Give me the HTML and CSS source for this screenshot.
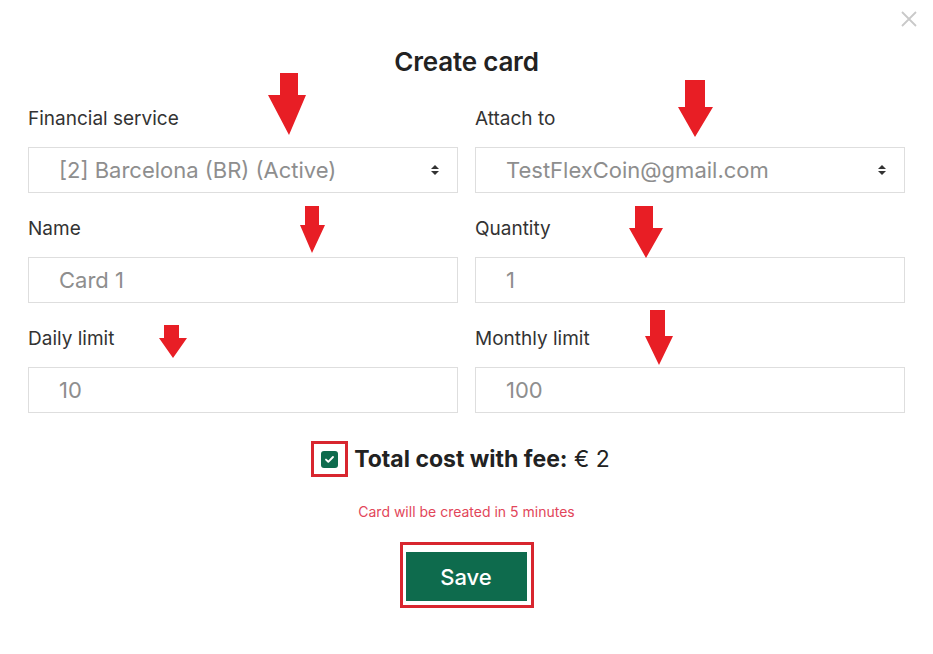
FILE: index.html
```html
<!DOCTYPE html>
<html lang="en">
<head>
<meta charset="utf-8">
<title>Create card</title>
<link rel="stylesheet" href="styles.css">
</head>
<body>
<div class="modal">
  <button class="close" aria-label="Close">
    <svg width="18" height="18" viewBox="0 0 18 18"><path d="M2 2L16 16M16 2L2 16" stroke="#c9c9c9" stroke-width="1.8" fill="none"/></svg>
  </button>
  <h1 class="title">Create card</h1>
  <div class="grid">
    <div class="field">
      <label class="label">Financial service</label>
      <div class="input select"><span>[2] Barcelona (BR) (Active)</span><span class="caret"><i class="up"></i><i class="down"></i></span></div>
    </div>
    <div class="field">
      <label class="label">Attach to</label>
      <div class="input select"><span>TestFlexCoin@gmail.com</span><span class="caret"><i class="up"></i><i class="down"></i></span></div>
    </div>
    <div class="field">
      <label class="label">Name</label>
      <div class="input"><span>Card 1</span></div>
    </div>
    <div class="field">
      <label class="label">Quantity</label>
      <div class="input"><span>1</span></div>
    </div>
    <div class="field">
      <label class="label">Daily limit</label>
      <div class="input"><span>10</span></div>
    </div>
    <div class="field">
      <label class="label">Monthly limit</label>
      <div class="input"><span>100</span></div>
    </div>
  </div>
  <div class="total">
    <span class="hl hl-check"><span class="checkbox"><svg width="11" height="9" viewBox="0 0 11 9"><path d="M2 4.6L4.3 6.8L9 2" stroke="#fff" stroke-width="1.9" fill="none" stroke-linecap="round" stroke-linejoin="round"/></svg></span></span>
    <span class="total-text"><b>Total cost with fee:</b> € 2</span>
  </div>
  <p class="notice">Card will be created in 5 minutes</p>
  <div class="actions">
    <span class="hl hl-save"><button class="save">Save</button></span>
  </div>
</div>
<svg class="arrows" width="933" height="654" viewBox="0 0 933 654">
  <g fill="#e81e25">
    <polygon points="280,73 298,73 298,95 306,95 289,135 268,95 280,95"/>
    <polygon points="685,80 705,80 705,107 713,107 695,137 678,107 685,107"/>
    <polygon points="305,206 319,206 319,225 325,225 312,253 300,225 305,225"/>
    <polygon points="635,206 653,206 653,228 663,228 646,258 629,228 635,228"/>
    <polygon points="164,325 179,325 179,338 187,338 173,358 159,338 164,338"/>
    <polygon points="650,310 665,310 665,336 673,336 659,365 645,336 650,336"/>
  </g>
</svg>
</body>
</html>
```
FILE: styles.css
```css
* { box-sizing: border-box; }
html, body { margin: 0; padding: 0; background: #fff; }
body {
  font-family: Inter, "Liberation Sans", Arial, sans-serif;
  color: #2b2b2b;
  width: 933px;
  height: 654px;
  overflow: hidden;
  position: relative;
}
.modal {
  padding: 46px 28px 0;
  display: flex;
  flex-direction: column;
  align-items: stretch;
}
.close {
  position: absolute;
  top: 10px;
  right: 15px;
  width: 18px;
  height: 18px;
  border: 0;
  padding: 0;
  background: none;
  display: flex;
}
.title {
  margin: 0;
  text-align: center;
  font-size: 26px;
  line-height: 32px;
  font-weight: 600;
  color: #222;
  letter-spacing: -0.2px;
}
.grid {
  margin-top: 30px;
  display: grid;
  grid-template-columns: 430px 430px;
  column-gap: 17px;
  row-gap: 25px;
}
.field { display: flex; flex-direction: column; }
.label {
  font-size: 19px;
  line-height: 22px;
  color: #333;
  margin-bottom: 17px;
}
.input {
  height: 46px;
  border: 1px solid #dedede;
  display: flex;
  align-items: center;
  justify-content: space-between;
  padding: 0 18px 0 30px;
  font-size: 22px;
  color: #8e8e8e;
}
.caret {
  display: flex;
  flex-direction: column;
  gap: 2px;
}
.caret i {
  display: block;
  width: 0;
  height: 0;
  border-left: 4px solid transparent;
  border-right: 4px solid transparent;
}
.caret .up { border-bottom: 4px solid #333; }
.caret .down { border-top: 4px solid #333; }
.total {
  margin-top: 28px;
  display: flex;
  justify-content: center;
  align-items: center;
  gap: 6px;
  padding-right: 12px;
}
.hl {
  display: inline-flex;
  border: 3px solid #d8262f;
}
.hl-check {
  width: 37px;
  height: 36px;
  align-items: center;
  justify-content: center;
}
.checkbox {
  width: 17px;
  height: 17px;
  border-radius: 3px;
  background: #0e6b4d;
  display: flex;
  align-items: center;
  justify-content: center;
}
.total-text {
  font-size: 23px;
  color: #222;
}
.total-text b { font-weight: 700; }
.notice {
  margin: 26px 0 0;
  text-align: center;
  font-size: 14px;
  line-height: 18px;
  color: #e2465a;
}
.actions {
  margin-top: 21px;
  display: flex;
  justify-content: center;
}
.hl-save {
  width: 134px;
  height: 66px;
  padding: 7px 4px 4px 3px;
}
.save {
  width: 121px;
  height: 49px;
  border: 0;
  background: #0e6b4d;
  color: #fff;
  font-family: Inter, "Liberation Sans", Arial, sans-serif;
  font-size: 22px;
  font-weight: 500;
}
.arrows {
  position: absolute;
  left: 0;
  top: 0;
  pointer-events: none;
}
```
